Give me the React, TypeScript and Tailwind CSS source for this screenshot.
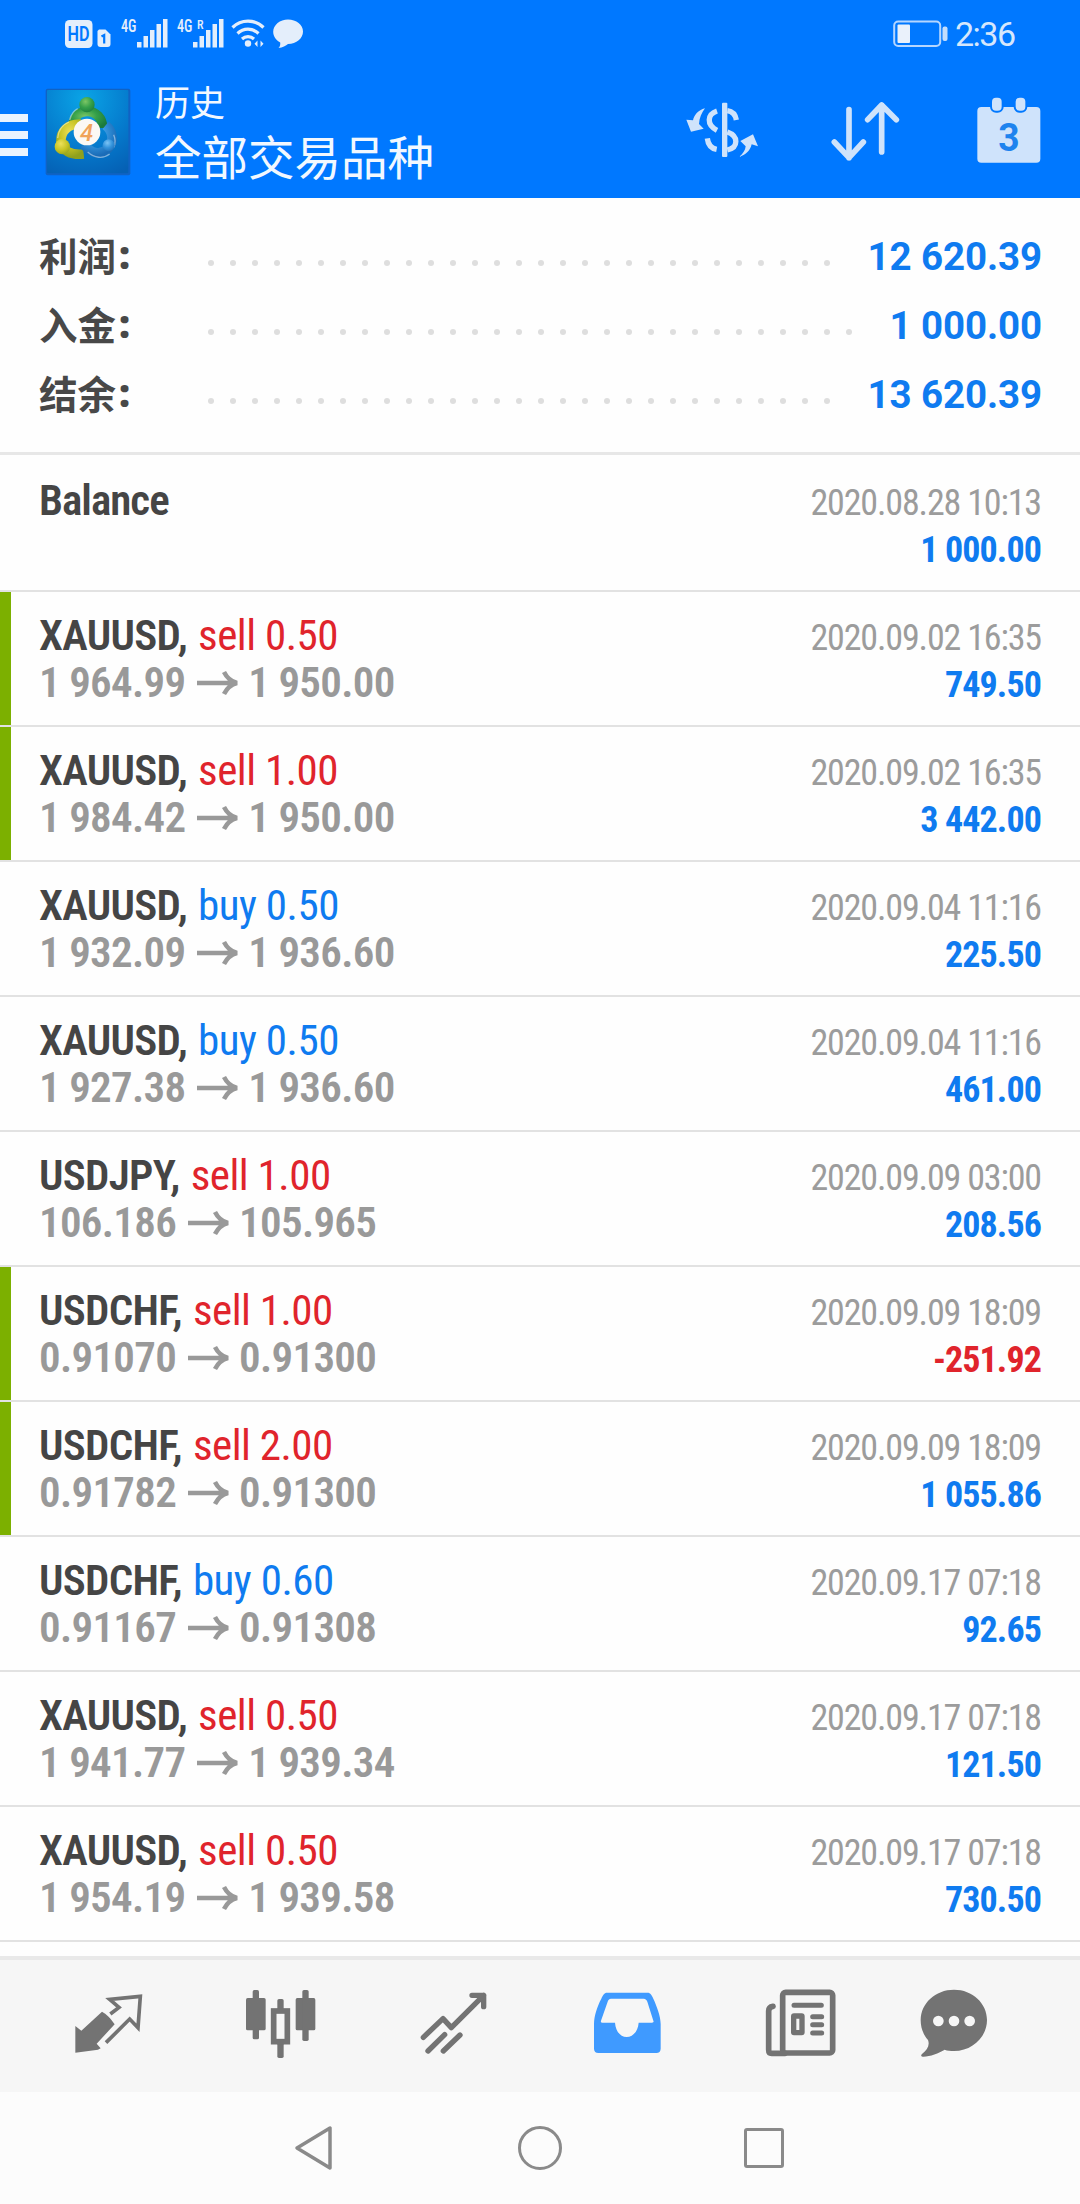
import clsx from "clsx";

type Deal = {
  symbol: string;
  side: "sell" | "buy";
  volume: string;
  open: string;
  close: string;
  time: string;
  profit: string;
  marked?: boolean;
};

const summary = [
  { label: "利润", value: "12 620.39", dots: 29 },
  { label: "入金", value: "1 000.00", dots: 30 },
  { label: "结余", value: "13 620.39", dots: 29 },
];

const deals: Deal[] = [
  { symbol: "XAUUSD", side: "sell", volume: "0.50", open: "1 964.99", close: "1 950.00", time: "2020.09.02 16:35", profit: "749.50", marked: true },
  { symbol: "XAUUSD", side: "sell", volume: "1.00", open: "1 984.42", close: "1 950.00", time: "2020.09.02 16:35", profit: "3 442.00", marked: true },
  { symbol: "XAUUSD", side: "buy", volume: "0.50", open: "1 932.09", close: "1 936.60", time: "2020.09.04 11:16", profit: "225.50" },
  { symbol: "XAUUSD", side: "buy", volume: "0.50", open: "1 927.38", close: "1 936.60", time: "2020.09.04 11:16", profit: "461.00" },
  { symbol: "USDJPY", side: "sell", volume: "1.00", open: "106.186", close: "105.965", time: "2020.09.09 03:00", profit: "208.56" },
  { symbol: "USDCHF", side: "sell", volume: "1.00", open: "0.91070", close: "0.91300", time: "2020.09.09 18:09", profit: "-251.92", marked: true },
  { symbol: "USDCHF", side: "sell", volume: "2.00", open: "0.91782", close: "0.91300", time: "2020.09.09 18:09", profit: "1 055.86", marked: true },
  { symbol: "USDCHF", side: "buy", volume: "0.60", open: "0.91167", close: "0.91308", time: "2020.09.17 07:18", profit: "92.65" },
  { symbol: "XAUUSD", side: "sell", volume: "0.50", open: "1 941.77", close: "1 939.34", time: "2020.09.17 07:18", profit: "121.50" },
  { symbol: "XAUUSD", side: "sell", volume: "0.50", open: "1 954.19", close: "1 939.58", time: "2020.09.17 07:18", profit: "730.50" },
];

function Signal({ roaming }: { roaming?: boolean }) {
  return (
    <svg className="-mt-2" width="48" height="40" viewBox="-1 -8 48 40" fill="#e4eefb">
      <text x="0" y="15" fontSize="18" fontWeight="500" textLength="15.500" lengthAdjust="spacingAndGlyphs" fontFamily="Roboto Condensed, sans-serif">4G</text>
      {roaming && (
        <text x="20" y="12" fontSize="12" fontWeight="500" fontFamily="Roboto Condensed, sans-serif">R</text>
      )}
      <rect x="16" y="25" width="4.500" height="5.500" />
      <rect x="22.500" y="19" width="4.500" height="11.500" />
      <rect x="29" y="13" width="4.500" height="17.500" />
      <rect x="35.500" y="7" width="4.500" height="23.500" />
      <rect x="42" y="2" width="4.500" height="28.500" />
    </svg>
  );
}

function StatusBar() {
  return (
    <div className="flex h-[67px] items-start pt-[17px] pl-[65px] text-[#e4eefb]">
      <svg width="47" height="32" viewBox="0 0 47 32">
        <rect x="0" y="3" width="27.5" height="28" rx="4.5" fill="#e4eefb" />
        <text x="2.5" y="24" fontSize="20" fontWeight="600" textLength="22" lengthAdjust="spacingAndGlyphs" fill="#0078ff" fontFamily="Roboto, sans-serif">HD</text>
        <path d="M34 12.500h6.500l5 5v9.500a3 3 0 0 1-3 3h-7a3 3 0 0 1-3-3V14z" fill="#e4eefb" />
        <path d="M36.500 19.500l2.700-1.500v8.500" fill="none" stroke="#0078ff" strokeWidth="2.200" />
      </svg>
      <div className="ml-2 flex">
        <Signal />
        <div className="ml-2">
          <Signal roaming />
        </div>
      </div>
      <svg className="ml-[7px]" width="36" height="32" viewBox="0 0 36 32" fill="none" stroke="#e4eefb" strokeWidth="3.200">
        <path d="M1.500 10.500a22 22 0 0 1 31 0M6.500 16.500a15 15 0 0 1 21 0M11 22a9 9 0 0 1 12 0" />
        <circle cx="17" cy="26.500" r="3.200" fill="#e4eefb" stroke="none" />
        <path d="M26.500 23.500l-3 3.200 3 3.200zM29.500 23.500l3 3.200-3 3.200z" fill="#e4eefb" stroke="none" />
      </svg>
      <svg className="ml-[6px]" width="31" height="32" viewBox="0 0 31 32" fill="#e4eefb">
        <path d="M15 2.500c8.300 0 15 5.300 15 12S23.500 27 15 27c-2 1.700-5.500 3.500-9.500 4 1.500-1.500 2-3.500 1.700-5.600C3 23.300.2 19.300.2 14.700.2 8 7 2.500 15 2.500z" />
      </svg>
      <svg className="ml-[589px]" width="56" height="32" viewBox="0 0 56 32">
        <rect x="1.200" y="4.500" width="46" height="24.500" rx="4" fill="none" stroke="#b5d6ff" strokeWidth="2" />
        <rect x="4.500" y="7.500" width="12.500" height="18.500" rx="1" fill="#eaf1fb" />
        <rect x="49.500" y="9.500" width="5" height="14.500" rx="2" fill="#c3ddfc" />
      </svg>
      <span className="ml-[6px] text-[34px] leading-[34px] tracking-[-1.5px] text-[#d6e7fc]">2:36</span>
    </div>
  );
}

function AppLogo() {
  return (
    <svg width="86" height="88" viewBox="0 0 258 264">
      <defs>
        <radialGradient id="tile" cx="0.45" cy="0.1" r="1">
          <stop offset="0" stopColor="#0aa4e6" />
          <stop offset="0.6" stopColor="#0579cc" />
          <stop offset="1" stopColor="#0560b4" />
        </radialGradient>
        <radialGradient id="green" cx="0.4" cy="0.3" r="0.8">
          <stop offset="0" stopColor="#7cc665" />
          <stop offset="0.5" stopColor="#35a04a" />
          <stop offset="1" stopColor="#1b7a3c" />
        </radialGradient>
        <radialGradient id="yellow" cx="0.4" cy="0.3" r="0.8">
          <stop offset="0" stopColor="#ece05a" />
          <stop offset="0.55" stopColor="#c8c424" />
          <stop offset="1" stopColor="#8fa01e" />
        </radialGradient>
        <radialGradient id="blue" cx="0.4" cy="0.3" r="0.8">
          <stop offset="0" stopColor="#7cc4f5" />
          <stop offset="0.5" stopColor="#3594dc" />
          <stop offset="1" stopColor="#1a6cb8" />
        </radialGradient>
      </defs>
      <rect x="2" y="2" width="254" height="260" rx="6" fill="#1062c4" />
      <rect x="6" y="6" width="244" height="250" rx="3" fill="url(#tile)" />
      <g fill="none" strokeWidth="29">
        <path d="M84 118c0-30 18-48 43-48s46 20 46 50" stroke="url(#green)" />
        <path d="M108 108c-40-2-62 24-60 52 2 28 30 42 68 38" stroke="url(#yellow)" />
        <path d="M182 112c24 20 24 50 8 68-20 22-48 20-74-10" stroke="url(#blue)" />
      </g>
      <g fill="none" stroke="#ffffff" strokeOpacity="0.45" strokeWidth="4">
        <path d="M74 96c4-16 12-28 24-34M38 150c2-22 14-40 34-48M206 140c6 14 6 26 0 38M128 192c20 18 46 22 66 6" />
      </g>
      <circle cx="126" cy="50" r="23" fill="url(#green)" />
      <circle cx="52" cy="176" r="23" fill="url(#yellow)" />
      <circle cx="191" cy="172" r="18" fill="url(#blue)" />
      <circle cx="126" cy="132" r="40" fill="#fbf8f4" />
      <text x="125" y="158" textAnchor="middle" fontSize="72" fontWeight="500" fontStyle="italic" fill="#f0a35a" fontFamily="Roboto, sans-serif">4</text>
    </svg>
  );
}

function Header() {
  return (
    <header className="flex h-[131px]">
      <div className="mt-[47px] flex w-7 flex-col gap-[9px]">
        <div className="h-2 bg-[#e9f3ff]" />
        <div className="h-2 bg-[#e9f3ff]" />
        <div className="h-2 bg-[#e9f3ff]" />
      </div>
      <div className="mt-[21px] ml-[17px]">
        <AppLogo />
      </div>
      <div className="mt-3 ml-6 w-[530px] font-['Noto_Sans_CJK_SC',sans-serif] text-[#f2f8ff]">
        <div className="text-[35px] leading-[44px]">历史</div>
        <div className="mt-[2px] text-[46.5px] leading-[60px]">全部交易品种</div>
      </div>

      <svg className="mt-[34px]" width="74" height="60" viewBox="45 50 222 180" fill="#cfe3fb">
        <path d="M105 72C84 78 72 92 69 108l-20-2 14 36 38-9-14-14c1-18 8-34 18-47z" />
        <path d="M207 218c12-10 19-20 20-32l-16-16 38-20 15 36-19-6c-5 20-18 32-38 38z" />
        <rect x="156" y="55" width="16" height="163" rx="3" />
        <g fill="none" stroke="#cfe3fb" strokeWidth="16">
          <path d="M141 80c-30 10-32 42 0 58M112 162c2 18 12 30 28 33M172 79c15 2 24 10 27 28M172 143c34 12 34 46 0 54" />
        </g>
      </svg>
      <svg className="mt-[34px] ml-[72px]" width="70" height="60" viewBox="482 50 210 180" fill="none" stroke="#cfe3fb" strokeWidth="17" strokeLinecap="round" strokeLinejoin="round">
        <path d="M536 76v144M492 173l44 47 43-47M634 203V62M592 106l42-44 44 44" />
      </svg>
      <svg className="mt-[30px] ml-[76px]" width="64" height="67" viewBox="920 40 192 201">
        <rect x="921" y="70" width="189" height="167" rx="12" fill="#cfe3fb" />
        <rect x="959" y="38" width="41" height="49" rx="18" fill="#0078ff" />
        <rect x="1030" y="38" width="41" height="49" rx="18" fill="#0078ff" />
        <rect x="965" y="42" width="29" height="39" rx="12" fill="#cfe3fb" />
        <rect x="1036" y="42" width="29" height="39" rx="12" fill="#cfe3fb" />
        <text x="1016" y="202" textAnchor="middle" fontSize="118" fontWeight="700" textLength="64" lengthAdjust="spacingAndGlyphs" fill="#1e83ee" fontFamily="Roboto, sans-serif">3</text>
      </svg>
    </header>
  );
}

function Summary() {
  return (
    <section className="h-[257px] border-b-3 border-[#e7e7e7] pt-6">
      {summary.map((item) => (
        <div key={item.label} className="flex h-[69px] items-center justify-between pr-[38px] pl-[39px]">
          <div className="-mt-1 flex w-[169px] font-['Noto_Sans_CJK_SC',sans-serif] text-[38.5px] font-bold text-[#484848]">
            {item.label}
            <span className="pl-[3px] font-['Open_Sans'] font-extrabold">:</span>
          </div>
          <div className="mt-[13px] flex flex-1 gap-4">
            {Array.from({ length: item.dots }, (_, i) => (
              <i key={i} className="size-1.5 rounded-full bg-[#dedede]" />
            ))}
          </div>
          <div className="mt-px text-[38.5px] font-bold tracking-[-0.1px] text-[#0f7bf0]">{item.value}</div>
        </div>
      ))}
    </section>
  );
}

function Arrow() {
  return (
    <svg className="mr-[9px] ml-3" width="42" height="26" viewBox="0 0 42 26" fill="none" stroke="#999" strokeWidth="4.500">
      <path d="M0 13h39M27 2c3 6 7 9.500 13 11-6 1.500-10 5-13 11" />
    </svg>
  );
}

function DealRow({ deal }: { deal: Deal }) {
  return (
    <div className="flex h-[135px] border-b-2 border-[#e2e2e2]">
      <div className={clsx("w-[11px]", deal.marked && "bg-[#7cb000]")} />
      <div className="flex flex-1 justify-between pt-5 pr-[39px] pl-7 font-['Roboto_Condensed',sans-serif] leading-[47px]">
        <div className="text-[43px]">
          <div className="flex">
            <span className="font-semibold tracking-[-0.7px] text-[#454545]">{deal.symbol},</span>
            <span className={clsx("ml-[11px] tracking-[-0.5px]", deal.side === "sell" ? "text-[#e0242c]" : "text-[#0f7bf0]")}>
              {deal.side} {deal.volume}
            </span>
          </div>
          <div className="flex items-center font-semibold tracking-[-0.7px] text-[#999]">
            {deal.open}
            <Arrow />
            {deal.close}
          </div>
        </div>
        <div className="pt-[3px] text-right text-[36px]">
          <div className="tracking-[-1.15px] text-[#9c9c9c]">{deal.time}</div>
          <div className={clsx("font-bold tracking-[-0.9px]", deal.profit.startsWith("-") ? "text-[#e0242c]" : "text-[#0f7bf0]")}>
            {deal.profit}
          </div>
        </div>
      </div>
    </div>
  );
}

function TabBar() {
  return (
    <nav className="flex h-[136px] border-t-4 border-[#e9e9e9] bg-[#f6f6f6] pl-[22px] text-[#737373]">
      <div className="flex w-[173px] justify-center pt-[20px] pr-[2px]">
        <svg width="88" height="90" viewBox="12 0 264 270">
          <path d="M46 138l18 14 62-57c12 6 28 22 38 38l-54 58 12 14-8 4-68 9z" fill="currentColor" />
          <path d="M151 102l26-20-28-24 92-9-7 94-25-26-71 71" fill="none" stroke="currentColor" strokeWidth="11" />
        </svg>
      </div>
      <div className="flex w-[173px] justify-center pt-[20px] pr-[3px]">
        <svg width="88" height="90" viewBox="528 0 264 270" fill="currentColor">
          <rect x="558" y="54" width="59" height="97" rx="5" />
          <rect x="578" y="30" width="19" height="148" rx="5" />
          <rect x="707" y="54" width="59" height="97" rx="5" />
          <rect x="727" y="30" width="19" height="153" rx="5" />
          <rect x="652" y="57" width="19" height="34" rx="5" />
          <rect x="652" y="188" width="19" height="46" rx="5" />
          <rect x="641" y="93" width="41" height="92" fill="none" stroke="currentColor" strokeWidth="17" />
        </svg>
      </div>
      <div className="flex w-[173px] justify-center pt-[20px] pr-[1px]">
        <svg width="88" height="90" viewBox="1050 0 264 270" fill="none" stroke="currentColor" strokeWidth="16" strokeLinecap="round" strokeLinejoin="round">
          <path d="M1090 172l59-56 25 27 97-97M1236 46h35v34M1104 213l50-49M1150 213l50-48" />
        </svg>
      </div>
      <div className="flex w-[173px] justify-center pt-[20px] text-[#3f9aff]">
        <svg width="88" height="90" viewBox="11 0 264 270" fill="currentColor" fillRule="evenodd">
          <path d="M80 38h122c8 0 13 8 17 18 10 22 22 52 22 76v74c0 8-5 13-13 13H54c-8 0-13-5-13-13v-74c0-24 10-54 22-76 4-10 9-18 17-18zM92 56c-6 0-8 4-10 9l-20 57c-1 4 0 6 4 6h38c2 26 16 43 35 43s34-17 36-43h40c4 0 6-2 4-6l-18-57c-2-5-5-9-11-9z" />
        </svg>
      </div>
      <div className="flex w-[173px] justify-center pt-[20px]">
        <svg width="88" height="90" viewBox="532 0 264 270" fill="none" stroke="currentColor" strokeWidth="17" strokeLinecap="round">
          <rect x="609" y="37" width="150" height="182" rx="9" />
          <path d="M616 220h-40q-9 0-9-11V93q0-12 13-14" />
          <path d="M643 76h82M699 110h27M699 134h27M699 159h27" strokeWidth="15" />
          <rect x="642" y="108" width="25" height="50" rx="1" strokeWidth="16" />
        </svg>
      </div>
      <div className="flex w-[133px] justify-center pt-[20px]">
        <svg width="88" height="90" viewBox="988 0 264 270" fill="currentColor">
          <path d="M1120 29c56 0 99 41 99 91s-43 93-99 93c-10 0-20-1-28-4-18 10-46 22-66 21-5 0-6-4-2-8 16-12 24-26 18-42-14-16-22-36-22-60 0-50 44-91 100-91z" />
          <g fill="#f6f6f6">
            <circle cx="1073" cy="123" r="16" />
            <circle cx="1120" cy="123" r="16" />
            <circle cx="1167" cy="123" r="16" />
          </g>
        </svg>
      </div>
    </nav>
  );
}

function SystemNav() {
  return (
    <div className="flex h-28 items-center bg-[#fcfcfc] pl-[294px]">
      <svg width="40" height="46" viewBox="0 0 40 46" fill="none" stroke="#8a8a8a" strokeWidth="3.500" strokeLinejoin="round">
        <path d="M36 3v40L3 23z" />
      </svg>
      <div className="ml-[184px] size-11 rounded-full border-[3.5px] border-[#8a8a8a]" />
      <div className="ml-[182px] size-10 rounded-[3px] border-[3.5px] border-[#8a8a8a]" />
    </div>
  );
}

export default function App() {
  return (
    <div className="flex h-[2204px] w-[1080px] flex-col overflow-hidden bg-[#fefefe] font-['Roboto',sans-serif]">
      <div className="bg-[#0078ff]">
        <StatusBar />
        <Header />
      </div>
      <Summary />
      <div className="flex h-[137px] justify-between border-b-2 border-[#e2e2e2] pt-[22px] pr-[39px] pl-[39px] font-['Roboto_Condensed',sans-serif] leading-[47px]">
        <div className="text-[43px] font-semibold tracking-[-1px] text-[#454545]">Balance</div>
        <div className="pt-[3px] text-right text-[36px]">
          <div className="tracking-[-1.15px] text-[#9c9c9c]">2020.08.28 10:13</div>
          <div className="font-bold tracking-[-0.9px] text-[#0f7bf0]">1 000.00</div>
        </div>
      </div>
      {deals.map((deal, i) => (
        <DealRow key={i} deal={deal} />
      ))}
      <div className="flex-1" />
      <TabBar />
      <SystemNav />
    </div>
  );
}
